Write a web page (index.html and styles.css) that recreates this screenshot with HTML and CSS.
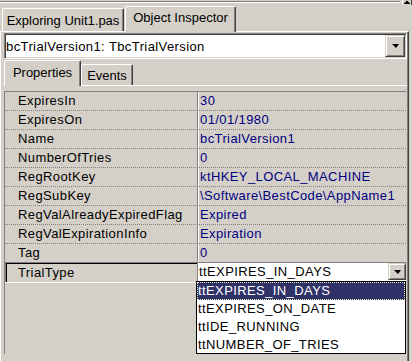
FILE: index.html
```
<!DOCTYPE html>
<html lang="en">
<head>
    <meta charset="UTF-8">
    <title>Object Inspector</title>
    <link rel="stylesheet" href="styles.css">
</head>
<body>
    <div class="topbar">
        <div class="topbar-line"></div>
        <div class="scroll-btn">
            <svg width="8" height="4" viewBox="0 0 8 4"><polygon points="0.5,4 4,0.5 7.5,4" fill="#000"/></svg>
        </div>
    </div>

    <div class="tabs outer-tabs">
        <div class="tab tab-explorer">Exploring Unit1.pas</div>
        <div class="tab tab-inspector active">Object Inspector</div>
    </div>

    <div class="page">
        <div class="combo">
            <span class="combo-text">bcTrialVersion1: TbcTrialVersion</span>
            <span class="drop-btn"><i class="arrow"></i></span>
        </div>

        <div class="tabs inner-tabs">
            <div class="tab tab-props active">Properties</div>
            <div class="tab tab-events">Events</div>
        </div>

        <div class="inner-page">
            <div class="grid">
                <div class="row"><div class="name">ExpiresIn</div><div class="value">30</div></div>
                <div class="row"><div class="name">ExpiresOn</div><div class="value">01/01/1980</div></div>
                <div class="row"><div class="name">Name</div><div class="value">bcTrialVersion1</div></div>
                <div class="row"><div class="name">NumberOfTries</div><div class="value">0</div></div>
                <div class="row"><div class="name">RegRootKey</div><div class="value">ktHKEY_LOCAL_MACHINE</div></div>
                <div class="row"><div class="name">RegSubKey</div><div class="value">\Software\BestCode\AppName1</div></div>
                <div class="row"><div class="name">RegValAlreadyExpiredFlag</div><div class="value">Expired</div></div>
                <div class="row"><div class="name">RegValExpirationInfo</div><div class="value">Expiration</div></div>
                <div class="row"><div class="name">Tag</div><div class="value">0</div></div>
                <div class="row selected">
                    <div class="name">TrialType</div>
                    <div class="value editor">
                        <span class="editor-text">ttEXPIRES_IN_DAYS</span>
                        <span class="drop-btn small"><i class="arrow"></i></span>
                    </div>
                </div>
            </div>

            <ul class="dropdown">
                <li class="current">ttEXPIRES_IN_DAYS</li>
                <li>ttEXPIRES_ON_DATE</li>
                <li>ttIDE_RUNNING</li>
                <li>ttNUMBER_OF_TRIES</li>
            </ul>
        </div>
    </div>
</body>
</html>
```

FILE: styles.css
```
body {
    margin: 0;
    width: 412px;
    height: 361px;
    overflow: hidden;
    background-color: #d4d0c8;
    font-family: "Liberation Sans", Arial, sans-serif;
    font-size: 13px;
    color: #000;
}

/* strip left of the window above the tabs */
.topbar {
    display: flex;
    height: 5px;
}
.topbar-line {
    flex: 1;
    height: 0;
    margin: 1px 2px 0 0;
    border-top: 1px solid #808080;
    border-bottom: 1px solid #fff;
}
.scroll-btn {
    width: 10px;
    height: 5px;
    box-sizing: border-box;
    border-left: 1px solid #fff;
    border-right: 1px solid #404040;
    display: flex;
    justify-content: center;
}
.scroll-btn svg {
    display: block;
}

/* tabs */
.tabs {
    display: flex;
    align-items: flex-end;
}
.outer-tabs {
    height: 26px;
    padding-left: 2px;
}
.inner-tabs {
    height: 26px;
    box-sizing: border-box;
    padding-top: 1px;
}
.tab {
    box-sizing: border-box;
    text-align: center;
    line-height: 16px;
    white-space: nowrap;
    border-top: 1px solid #fff;
    border-left: 1px solid #fff;
    border-right: 1px solid #404040;
    border-radius: 2px 2px 0 0;
    box-shadow: inset -1px 0 #808080;
    background-color: #d4d0c8;
}
.tab.active {
    position: relative;
    z-index: 1;
    margin-bottom: -1px;
}
.tab-explorer {
    width: 122px;
    height: 23px;
    padding-top: 4px;
    margin-right: 1px;
}
.tab-inspector {
    width: 111px;
    height: 26px;
    padding-top: 3px;
}
.tab-props {
    width: 77px;
    height: 26px;
    padding-top: 4px;
}
.tab-events {
    width: 52px;
    height: 21px;
    padding-top: 3px;
}

.page {
    width: 409px;
    height: 330px;
    box-sizing: border-box;
    padding: 1px 0 0 3px;
    border-top: 1px solid #fff;
    border-left: 1px solid #fff;
    border-right: 1px solid #404040;
    box-shadow: inset -1px 0 #808080;
}

/* object selector */
.combo {
    width: 403px;
    height: 26px;
    box-sizing: border-box;
    padding: 1px;
    display: flex;
    align-items: center;
    background-color: #fff;
    border: 1px solid;
    border-color: #808080 #fff #fff #808080;
    box-shadow: inset 1px 1px #404040, inset -1px -1px #d4d0c8;
}
.combo-text {
    flex: 1;
    white-space: nowrap;
    letter-spacing: 0.4px;
}
.drop-btn {
    width: 20px;
    height: 22px;
    box-sizing: border-box;
    display: flex;
    align-items: center;
    justify-content: center;
    background-color: #d4d0c8;
    border: 1px solid;
    border-color: #d4d0c8 #404040 #404040 #d4d0c8;
    box-shadow: inset 1px 1px #fff, inset -1px -1px #808080;
}
.drop-btn.small {
    width: 18px;
    height: 17px;
}
.arrow {
    width: 0;
    height: 0;
    border-left: 4px solid transparent;
    border-right: 3px solid transparent;
    border-top: 4px solid #000;
}

/* property grid */
.inner-page {
    position: relative;
    width: 403px;
    height: 276px;
    border-top: 1px solid #fff;
}
.grid {
    width: 402px;
    height: 263px;
    box-sizing: border-box;
    margin-top: 5px;
    border-top: 1px solid #808080;
    border-left: 1px solid #808080;
    letter-spacing: 0.4px;
}
.row {
    display: grid;
    grid-template-columns: 192px 1fr;
    height: 19px;
    box-sizing: border-box;
    border-bottom: 1px dotted #808080;
    line-height: 18px;
    white-space: nowrap;
}
.name {
    padding-left: 13px;
}
.value {
    padding-left: 2px;
    color: #000080;
    border-left: 1px solid #808080;
    box-shadow: inset 1px 0 #fff;
}
.row.selected {
    height: 21px;
    margin-top: -1px;
    padding-top: 2px;
    border-bottom: 1px solid #fff;
    box-shadow: inset 1px 1px #808080, inset 2px 2px #000;
}
.row.selected .value {
    margin-top: -1px;
}
.editor {
    display: flex;
    height: 18px;
    padding-left: 1px;
    color: #000;
    background-color: #fff;
}
.editor-text {
    flex: 1;
    line-height: 18px;
}

/* open list of the TrialType editor */
.dropdown {
    position: absolute;
    top: 195px;
    left: 192px;
    width: 210px;
    height: 73px;
    box-sizing: border-box;
    margin: 0;
    padding: 0;
    list-style: none;
    background-color: #fff;
    border: 1px solid #000;
    overflow: hidden;
    letter-spacing: 0.4px;
}
.dropdown li {
    height: 18px;
    box-sizing: border-box;
    line-height: 16px;
    border: 1px solid transparent;
    white-space: nowrap;
}
.dropdown li.current {
    background-color: #2f3268;
    color: #fff;
    border: 1px dotted #f0f0c0;
}
```
